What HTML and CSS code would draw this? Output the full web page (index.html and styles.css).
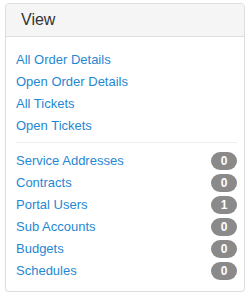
FILE: index.html
```html
<!DOCTYPE html>
<html lang="en">
<head>
  <meta charset="UTF-8">
  <title>View</title>
  <link rel="stylesheet" href="styles.css">
</head>
<body>
  <div class="panel">
    <div class="panel-heading">
      <h3 class="panel-title">View</h3>
    </div>
    <div class="panel-body">
      <ul class="links">
        <li><a href="#">All Order Details</a></li>
        <li><a href="#">Open Order Details</a></li>
        <li><a href="#">All Tickets</a></li>
        <li><a href="#">Open Tickets</a></li>
      </ul>
      <hr>
      <ul class="links">
        <li><a href="#">Service Addresses</a><span class="badge">0</span></li>
        <li><a href="#">Contracts</a><span class="badge">0</span></li>
        <li><a href="#">Portal Users</a><span class="badge">1</span></li>
        <li><a href="#">Sub Accounts</a><span class="badge">0</span></li>
        <li><a href="#">Budgets</a><span class="badge">0</span></li>
        <li><a href="#">Schedules</a><span class="badge">0</span></li>
      </ul>
    </div>
  </div>
</body>
</html>
```
FILE: styles.css
```css
/*common*/
* {
  box-sizing: border-box;
  margin: 0;
  padding: 0;
}
body {
  margin: 3px 5px;
  font-family: "Liberation Sans", Arial, sans-serif;
  font-size: 13px;
  color: #333;
  background: #fff;
}
.panel {
  border: 1px solid #ddd;
  border-radius: 4px;
  box-shadow: 0 1px 1px rgba(0,0,0,.05);
  background: #fff;
}
.panel-heading {
  padding: 7px 15px;
  background: #f5f5f5;
  border-bottom: 1px solid #ddd;
  border-radius: 3px 3px 0 0;
}
.panel-title {
  font-size: 16px;
  font-weight: normal;
  line-height: 18px;
  color: #333;
}
.panel-body {
  padding: 12px 7px 9px 10px;
}
.links {
  list-style: none;
}
.links li {
  display: flex;
  justify-content: space-between;
  align-items: center;
  height: 22px;
}
.links a {
  color: #1f88d2;
  text-decoration: none;
  line-height: 22px;
}
hr {
  border: 0;
  border-top: 1px solid #eee;
  margin: 5px 0 7px;
}
.badge {
  width: 26px;
  height: 18px;
  line-height: 18px;
  border-radius: 9px;
  background: #8a8a8a;
  color: #fff;
  font-size: 12px;
  font-weight: bold;
  text-align: center;
}
```
